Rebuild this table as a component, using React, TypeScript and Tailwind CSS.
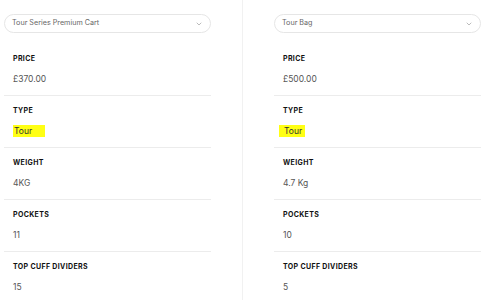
import { ChevronDown } from 'lucide-react';

type Spec = { label: string; value: string; mark?: string };

const products: { name: string; specs: Spec[] }[] = [
  {
    name: 'Tour Series Premium Cart',
    specs: [
      { label: 'Price', value: '£370.00' },
      { label: 'Type', value: 'Tour', mark: 'pl-[1px] pr-[13px]' },
      { label: 'Weight', value: '4KG' },
      { label: 'Pockets', value: '11' },
      { label: 'Top Cuff Dividers', value: '15' },
    ],
  },
  {
    name: 'Tour Bag',
    specs: [
      { label: 'Price', value: '£500.00' },
      { label: 'Type', value: 'Tour', mark: '-ml-[4px] pl-[5px] pr-[3px]' },
      { label: 'Weight', value: '4.7 Kg' },
      { label: 'Pockets', value: '10' },
      { label: 'Top Cuff Dividers', value: '5' },
    ],
  },
];

function Column({ name, specs, side }: { name: string; specs: Spec[]; side: 'left' | 'right' }) {
  return (
    <div
      className={
        side === 'left'
          ? 'w-[242px] pl-[4px] pr-[31px] pt-[14px]'
          : 'w-[243px] border-l border-[#f1f1f1] pl-[31px] pr-[4px] pt-[14px]'
      }
    >
      <button className="flex h-[19px] w-full items-center justify-between rounded-full border border-[#e6e6e6] pl-[7px] pr-[7px] text-left text-[7.2px] text-[#666]">
        <span>{name}</span>
        <ChevronDown className="h-[8px] w-[8px] text-[#777]" strokeWidth={1.5} />
      </button>

      <div className="mt-[11px]">
        {specs.map((s) => (
          <div key={s.label} className="border-b border-[#ececec] pb-[10px] pl-[9px] pt-[10px]">
            <div className="text-[7px] font-bold uppercase leading-[10px] tracking-[0.05em] text-[#111]">
              {s.label}
            </div>
            <div className="mt-[9px] text-[8.5px] leading-[12px] text-[#555]">
              {s.mark ? (
                <span className={`bg-[#ffff14] py-[1px] text-[#333] ${s.mark}`}>{s.value}</span>
              ) : (
                s.value
              )}
            </div>
          </div>
        ))}
      </div>
    </div>
  );
}

export default function App() {
  return (
    <div className="flex h-[300px] w-[485px] overflow-hidden bg-white font-['Inter',sans-serif]">
      <Column name={products[0].name} specs={products[0].specs} side="left" />
      <Column name={products[1].name} specs={products[1].specs} side="right" />
    </div>
  );
}
